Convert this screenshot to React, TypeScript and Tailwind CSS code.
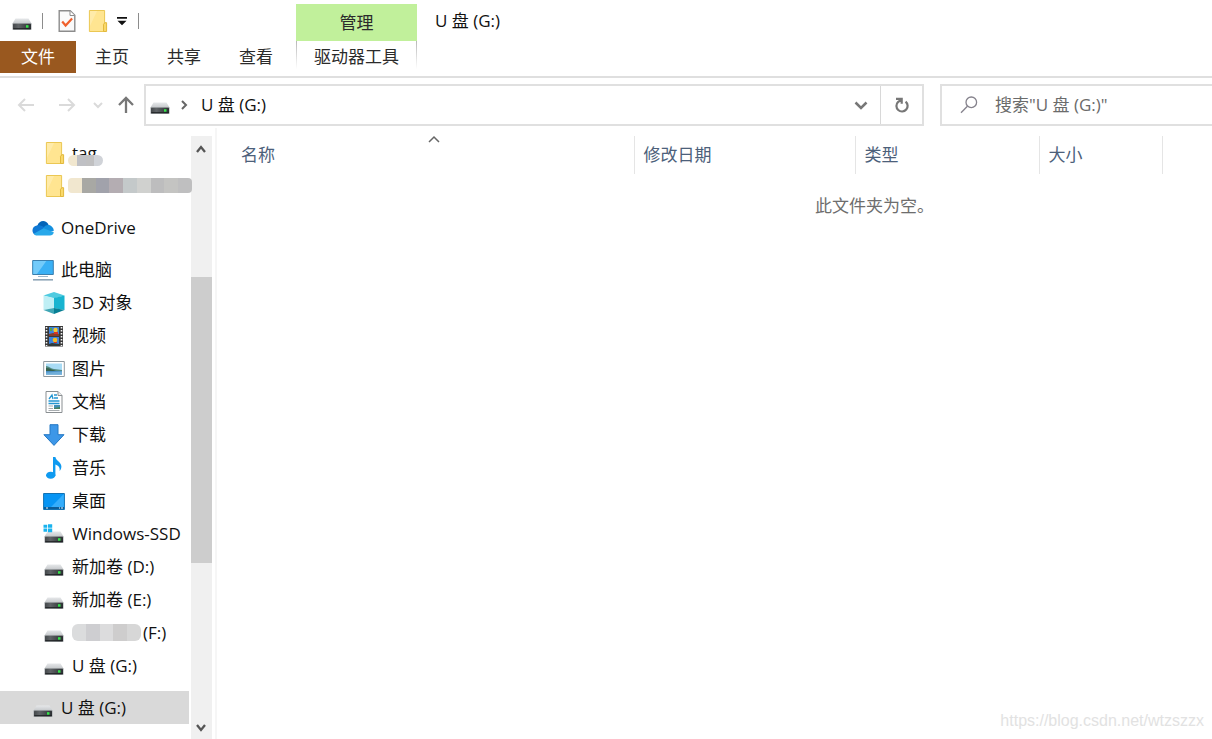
import type { ReactNode } from 'react';

function DriveIcon({ windows = false }: { windows?: boolean }) {
  return (
    <svg viewBox="0 0 22 22" className="h-[22px] w-[22px] shrink-0" aria-hidden="true">
      <defs>
        <linearGradient id="driveTop" x1="0" y1="0" x2="0" y2="1">
          <stop offset="0" stopColor="#e6e8ea" />
          <stop offset="1" stopColor="#bfc2c5" />
        </linearGradient>
        <linearGradient id="driveFront" x1="0" y1="0" x2="1" y2="0">
          <stop offset="0" stopColor="#44484b" />
          <stop offset="0.3" stopColor="#606467" />
          <stop offset="1" stopColor="#2b2f32" />
        </linearGradient>
      </defs>
      <path d="M4.5 8.5h13l3 5v1h-19v-1z" fill="url(#driveTop)" />
      <rect x="1.5" y="13.3" width="19" height="6.7" rx="0.8" fill="#a0a4a7" />
      <rect x="2" y="13.8" width="18" height="5.4" rx="0.4" fill="url(#driveFront)" />
      <path d="M2.3 18.2h17.4v1H2.3z" fill="#1d2022" />
      <rect x="15" y="15.2" width="2.5" height="2.5" fill="#35e64a" />
      {windows && (
        <path d="M0.5 1.7h3.7v3H.5zM5 1.2h4.2v3.5H5zM.5 5.5h3.7v3.2H.5zM5 5.5h4.2v3.7H5z" fill="#19b3ee" />
      )}
    </svg>
  );
}

function FolderIcon() {
  return (
    <svg viewBox="0 0 22 22" className="h-[22px] w-[22px] shrink-0" aria-hidden="true">
      <path d="M3.4.5h15.2v21H3.4z" fill="#ffe591" stroke="#ebc753" />
      <path d="M4 1h7L4 16z" fill="#ffeba9" />
      <path d="M17.5 21.5v-7.2l1.4-1.6h1.7v8.8z" fill="#f9d869" stroke="#e2b93d" />
    </svg>
  );
}

function OneDriveIcon() {
  return (
    <svg viewBox="0 0 22 22" className="h-[22px] w-[22px] shrink-0" aria-hidden="true">
      <path d="M5.5 8.5C7 3.2 14 2 16.8 8.2l-4.3 5.3L4 14z" fill="#0364b8" />
      <path d="M5.6 8.3c2-.4 3.8.3 5.4 1.3l3 2L4.2 18C-1 17.2-1 9 5.6 8.3z" fill="#0f78d4" />
      <path d="M11 11.2c1.5-2.4 3.7-3.6 6-3.2 2.5.7 5 3.4 4.7 5.9l-5.5 1z" fill="#1490df" />
      <path d="M1.8 16.7l9.7-5.5 10.3 4c-.4 2.2-2 3.3-3.8 3.3H4.8c-1.2 0-2.2-.7-3-1.8z" fill="#28a8ea" />
    </svg>
  );
}

function ComputerIcon() {
  return (
    <svg viewBox="0 0 22 22" className="h-[22px] w-[22px] shrink-0" aria-hidden="true">
      <path d="M.7 1.5h20.6v14H.7z" fill="#39b0f5" stroke="#3b7fae" />
      <path d="M1.3 2h13L5 15H1.3z" fill="#73cbfa" />
      <path d="M6 17h10v1H6z" fill="#9cb6ca" />
      <path d="M1 20h20v1.6H1z" fill="#8ea5b7" />
    </svg>
  );
}

function CubeIcon() {
  return (
    <svg viewBox="0 0 22 22" className="h-[22px] w-[22px] shrink-0" aria-hidden="true">
      <path d="M11 0l10.5 3.5-10.5 3L.5 3.5z" fill="#50cbe0" />
      <path d="M.5 3.5L11 6v10.2L.5 18z" fill="#bfeff5" />
      <path d="M11 6l10.5-2.5V18L11 16.2z" fill="#18b4d0" />
      <path d="M.5 18L11 16v6z" fill="#3fa6b5" />
      <path d="M11 16l10.5 2L11 22z" fill="#087f94" />
    </svg>
  );
}

function VideoIcon() {
  return (
    <svg viewBox="0 0 22 22" className="h-[22px] w-[22px] shrink-0" aria-hidden="true">
      <path d="M2 1h18v20.5H2z" fill="#393939" />
      <path d="M3.5 2v19M18.5 2v19" stroke="#f4f4f4" strokeWidth="1.6" strokeDasharray="1.6 1.4" />
      <path d="M6 2h10v9H6zM6 12h10v9H6z" fill="#3c83dd" />
      <path d="M6 9l4-1 6 1v2H6z" fill="#8c3c2a" />
      <path d="M6 19l3-1 7 1v2H6z" fill="#313b3a" />
      <circle cx="12.5" cy="5" r="2.2" fill="#f6c832" />
      <circle cx="12" cy="15" r="2.3" fill="#f4bc24" />
      <path d="M11 7h4v2h-4zM11 17h3v1h-3z" fill="#d73524" />
      <path d="M7 3h2v3H7z" fill="#57a549" />
    </svg>
  );
}

function PictureIcon() {
  return (
    <svg viewBox="0 0 22 22" className="h-[22px] w-[22px] shrink-0" aria-hidden="true">
      <path d="M.7 3.5h20.6v15H.7z" fill="#fff" stroke="#8e989e" />
      <path d="M3 5.5h16v11H3z" fill="#a8dbf5" />
      <path d="M3 8c3 0 5 3 8 3l8 1v1H3z" fill="#528b82" />
      <path d="M3 10c4 0 6 2 10 3H3z" fill="#36614d" />
      <path d="M3 13h16v3.5H3z" fill="#4a90c5" />
      <path d="M3 14.5l16-1v3H3z" fill="#70aed9" />
    </svg>
  );
}

function DocumentIcon() {
  return (
    <svg viewBox="0 0 22 22" className="h-[22px] w-[22px] shrink-0" aria-hidden="true">
      <path d="M3 .5h12l4 4v17H3z" fill="#fff" stroke="#8a8f92" />
      <path d="M15 .5v4h4" fill="#eee" stroke="#8a8f92" />
      <path d="M6 8l3-4 1 4M11 4h3M11 7h4M5.5 10h11M5.5 12.5h11" fill="none" stroke="#2496d2" strokeWidth="1.3" />
      <path d="M5.5 15H10M5.5 17.5H10M5.5 19.5h11" stroke="#a8adb0" />
      <path d="M11 14h6v4h-6z" fill="#418fb6" />
      <path d="M11 17l6-1v2h-6z" fill="#4a825e" />
    </svg>
  );
}

function DownloadIcon() {
  return (
    <svg viewBox="0 0 22 22" className="h-[22px] w-[22px] shrink-0" aria-hidden="true">
      <path d="M7 .7h8v10h6L11 21.4.9 10.7H7z" fill="#3d97e8" stroke="#2478c4" />
    </svg>
  );
}

function MusicIcon() {
  return (
    <svg viewBox="0 0 22 22" className="h-[22px] w-[22px] shrink-0" aria-hidden="true">
      <ellipse cx="7.7" cy="18.3" rx="4.7" ry="3.5" fill="#0f9af0" />
      <path d="M10 0h2.4c.5 4 6 5 6 9.5 0 2-1 3.7-1.8 4.5.6-4-1.3-5.4-4.2-6.5v11H10z" fill="#0f9af0" />
    </svg>
  );
}

function DesktopIcon() {
  return (
    <svg viewBox="0 0 22 22" className="h-[22px] w-[22px] shrink-0" aria-hidden="true">
      <path d="M.6 3.5h20.8v16H.6z" fill="#0795f4" stroke="#1272b3" />
      <path d="M8 17L20.8 4v13z" fill="#35adfb" />
      <path d="M1 17h20v2H1z" fill="#0b5d99" />
      <path d="M3 18h2M16 18h1M18 18h2" stroke="#e9f6ff" />
    </svg>
  );
}

function TaskIcon() {
  return (
    <svg viewBox="0 0 22 22" className="h-[22px] w-[22px] shrink-0" aria-hidden="true">
      <path d="M3.2.8h11l4.6 4.6v15.8H3.2z" fill="#fafafa" stroke="#8c8c8c" strokeWidth="1.4" />
      <path d="M14 1v4.5h4.6" fill="#fff" stroke="#8c8c8c" />
      <path d="M6.2 11.5l3.4 4 6.5-7" fill="none" stroke="#f0602c" strokeWidth="2.2" />
    </svg>
  );
}

type ArrowProps = { d: string; width?: number; className?: string };

function Arrow({ d, width = 2, className = '' }: ArrowProps) {
  return (
    <svg viewBox="0 0 18 18" className={`h-[18px] w-[18px] shrink-0 ${className}`} fill="none" stroke="currentColor" strokeWidth={width} aria-hidden="true">
      <path d={d} />
    </svg>
  );
}

function Mosaic({ colors, className }: { colors: string[]; className: string }) {
  return (
    <span className={`flex overflow-hidden ${className}`} aria-hidden="true">
      {colors.map((color, i) => (
        <span key={i} className="flex-1" style={{ backgroundColor: color }} />
      ))}
    </span>
  );
}

function TreeItem({ icon, nested = false, selected = false, children }: {
  icon: ReactNode;
  nested?: boolean;
  selected?: boolean;
  children?: ReactNode;
}) {
  return (
    <li>
      <a
        href="#"
        className={`mr-[2px] flex h-[33px] items-center gap-[7px] whitespace-nowrap ${nested ? 'pl-[43px]' : 'pl-8'} ${selected ? 'bg-[#d9d9d9]' : ''}`}
      >
        {icon}
        {children}
      </a>
    </li>
  );
}

const libraries = [
  { name: '3D 对象', icon: <CubeIcon /> },
  { name: '视频', icon: <VideoIcon /> },
  { name: '图片', icon: <PictureIcon /> },
  { name: '文档', icon: <DocumentIcon /> },
  { name: '下载', icon: <DownloadIcon /> },
  { name: '音乐', icon: <MusicIcon /> },
  { name: '桌面', icon: <DesktopIcon /> },
  { name: 'Windows-SSD', icon: <DriveIcon windows /> },
  { name: '新加卷 (D:)', icon: <DriveIcon /> },
  { name: '新加卷 (E:)', icon: <DriveIcon /> },
];

function Ribbon() {
  return (
    <header className="flex border-b-2 border-[#dfdfdf] pb-[3px]">
      <div className="w-[296px] shrink-0">
        <div className="flex h-[41px] items-center pl-[11px]">
          <DriveIcon />
          <span className="mr-[13px] ml-[9px] h-4 w-px bg-[#8c8c8c]" />
          <button aria-label="属性"><TaskIcon /></button>
          <button aria-label="新建文件夹" className="ml-2"><FolderIcon /></button>
          <button aria-label="自定义快速访问工具栏" className="ml-2">
            <svg viewBox="0 0 12 10" className="h-[10px] w-3" aria-hidden="true">
              <path d="M1 1h10v1.8H1zM1.5 4.8h9L6 9.3z" fill="#111" />
            </svg>
          </button>
          <span className="ml-[10px] h-4 w-px bg-[#8c8c8c]" />
        </div>
        <nav className="flex h-8 text-[#2b2b2b]">
          <button className="w-[76px] bg-[#99581f] text-white">文件</button>
          <button className="w-[72px]">主页</button>
          <button className="w-[72px]">共享</button>
          <button className="w-[72px]">查看</button>
        </nav>
      </div>
      <div className="w-[121px] shrink-0 pt-1 text-center text-[#2b2b2b]">
        <div className="flex h-[37px] items-center justify-center bg-[#c1f09b]">管理</div>
        <div className="flex h-8 justify-between">
          <span className="h-7 w-px bg-linear-to-b from-[#b8b8b8] to-white" />
          <button>驱动器工具</button>
          <span className="h-7 w-px bg-linear-to-b from-[#b8b8b8] to-white" />
        </div>
      </div>
      <h1 className="flex h-[41px] items-center pl-[18px]">U 盘 (G:)</h1>
    </header>
  );
}

function AddressBar() {
  return (
    <div className="flex h-[50px] items-center overflow-hidden pt-[6px] pb-[2px]">
      <div className="flex w-36 shrink-0 items-center pl-[17px] text-[#dadada]">
        <button aria-label="后退"><Arrow d="M17 9H2M8 3L2 9l6 6" /></button>
        <button aria-label="前进" className="ml-[23px]"><Arrow d="M1 9h15M10 3l6 6-6 6" /></button>
        <button aria-label="最近浏览的位置" className="ml-[13px]"><Arrow d="M5 7l4 4 4-4" /></button>
        <button aria-label="上移" className="ml-[10px] text-[#777]"><Arrow d="M9 17V2M2 9l7-7 7 7" width={2.3} /></button>
      </div>
      <div className="flex h-[42px] flex-1 items-center border-2 border-[#e0e0e0]">
        <span className="ml-[3px]"><DriveIcon /></span>
        <Arrow d="M7 5l4 4-4 4" className="ml-1 text-[#666]" />
        <a href="#" className="ml-2">U 盘 (G:)</a>
        <button aria-label="以前的位置" className="ml-auto px-[10px] text-[#777]"><Arrow d="M3.5 6.5L9 12l5.5-5.5" width={2.5} /></button>
        <button aria-label="刷新" className="flex h-full w-[42px] items-center justify-center border-l border-[#d8d8d8] text-[#777]">
          <Arrow d="M12.6 5.6A5.6 5.6 0 1 1 5 6L8.3 3.6M3 2.8h5.7v5" width={2.2} />
        </button>
      </div>
      <label className="ml-4 flex h-[42px] w-[272px] shrink-0 items-center border-2 border-r-0 border-[#e0e0e0] pl-[18px]">
        <svg viewBox="0 0 18 18" className="h-[18px] w-[18px] shrink-0" fill="none" stroke="#85828c" strokeWidth="1.3" aria-hidden="true">
          <circle cx="11.3" cy="6.3" r="5.3" />
          <path d="M7.4 10.2L1 16.8" />
        </svg>
        <input
          type="search"
          aria-label="搜索"
          placeholder={'搜索"U 盘 (G:)"'}
          className="ml-[17px] w-full min-w-0 outline-none placeholder:text-[#6b6b6b]"
        />
      </label>
    </div>
  );
}

function Sidebar() {
  return (
    <ul className="flex w-[191px] shrink-0 flex-col gap-[9px] pt-2">
      <li>
        <ul>
          <TreeItem nested icon={<FolderIcon />}>
            <span className="relative">
              tag
              <Mosaic
                colors={['#f1e7cf', '#bfc0c4', '#c0c0c1', '#d0d3d8']}
                className="absolute top-[14px] -left-1 h-[11px] w-[35px] rounded-full"
              />
            </span>
          </TreeItem>
          <TreeItem nested icon={<FolderIcon />}>
            <Mosaic
              colors={['#f1e7cf', '#a8a8a4', '#a1a2ab', '#b4adb2', '#c4c9ca', '#d0d1cf', '#bdbdbe', '#c4c4c2', '#bfbfc0']}
              className="z-10 -ml-1 h-[15px] w-[124px] shrink-0 rounded-sm"
            />
          </TreeItem>
        </ul>
      </li>
      <TreeItem icon={<OneDriveIcon />}>OneDrive</TreeItem>
      <li>
        <ul>
          <TreeItem icon={<ComputerIcon />}>此电脑</TreeItem>
          {libraries.map((item) => (
            <TreeItem key={item.name} nested icon={item.icon}>{item.name}</TreeItem>
          ))}
          <TreeItem nested icon={<DriveIcon />}>
            <Mosaic
              colors={['#dbdcdd', '#ceced1', '#dcdcdd', '#cecdcd', '#d7d7d7']}
              className="h-[17px] w-[69px] rounded-md"
            />
            <span className="-ml-[5px]">(F:)</span>
          </TreeItem>
          <TreeItem nested icon={<DriveIcon />}>U 盘 (G:)</TreeItem>
        </ul>
      </li>
      <TreeItem selected icon={<DriveIcon />}>U 盘 (G:)</TreeItem>
    </ul>
  );
}

function Scrollbar() {
  return (
    <div className="mt-2 flex w-[21px] shrink-0 flex-col bg-[#f0f0f0] text-[#555]">
      <button aria-label="向上滚动" className="flex h-[25px] items-center pl-px"><Arrow d="M5 12l4-5 4 5" width={2.3} /></button>
      <span className="grow-[116]" />
      <span className="grow-[286] bg-[#cdcdcd]" />
      <span className="grow-[151]" />
      <button aria-label="向下滚动" className="flex h-[25px] items-center pl-px"><Arrow d="M5 7l4 5 4-5" width={2.3} /></button>
    </div>
  );
}

function FileList() {
  return (
    <main className="ml-[3px] min-w-0 flex-1 border-l-2 border-[#f6f6f6] pt-2 pl-[15px]">
      <table className="w-full table-fixed text-left text-[#4c607a]">
        <thead>
          <tr className="h-[38px]">
            <th className="relative w-[402px] border-r border-[#e5e5e5] px-[9px] font-normal">
              名称
              <Arrow d="M4 11l5-5 5 5" width={1.5} className="absolute -top-[5px] left-[193px] text-[#666]" />
            </th>
            <th className="w-[221px] border-r border-[#e5e5e5] px-[9px] font-normal">修改日期</th>
            <th className="w-[184px] border-r border-[#e5e5e5] px-[9px] font-normal">类型</th>
            <th className="w-[123px] border-r border-[#e5e5e5] px-[9px] font-normal">大小</th>
            <th />
          </tr>
        </thead>
        <tbody>
          <tr className="h-16 text-[#6d6d6d]">
            <td />
            <td colSpan={4} className="pl-[181px]">此文件夹为空。</td>
          </tr>
        </tbody>
      </table>
    </main>
  );
}

export default function App() {
  return (
    <div className="relative flex min-h-screen flex-col overflow-hidden bg-white font-['Open_Sans','Noto_Sans_CJK_SC',sans-serif] text-[17px] leading-6 text-[#111]">
      <Ribbon />
      <AddressBar />
      <div className="flex flex-1">
        <Sidebar />
        <Scrollbar />
        <FileList />
      </div>
      <span className="absolute right-2 bottom-[6px] font-['Liberation_Sans',sans-serif] text-base text-[#e2e2e2]">
        https://blog.csdn.net/wtzszzx
      </span>
    </div>
  );
}
